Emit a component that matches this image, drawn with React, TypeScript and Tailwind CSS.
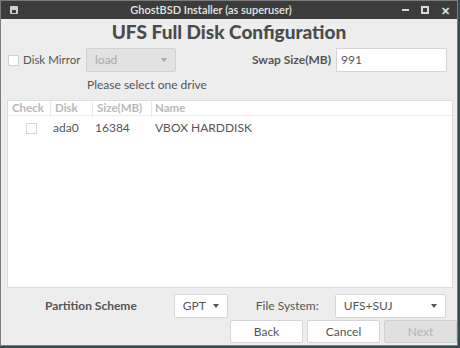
import { ChevronDown } from 'lucide-react';

const font = { fontFamily: 'Lato, "Noto Sans", sans-serif' };

function Combo({ label, disabled, className }: { label: string; disabled?: boolean; className: string }) {
  return (
    <div
      className={`flex items-center justify-between rounded-[2px] border px-2 text-[12px] ${
        disabled ? 'border-[#d2d2d2] bg-[#e2e2e2] text-[#a8a8a8]' : 'border-[#d6d6d6] bg-white text-[#555]'
      } ${className}`}
    >
      <span>{label}</span>
      <span className={`h-0 w-0 border-x-[3.5px] border-t-[4px] border-x-transparent ${disabled ? 'border-t-[#aaa]' : 'border-t-[#555]'}`} />
    </div>
  );
}

export default function App() {
  const rows = [{ disk: 'ada0', size: '16384', name: 'VBOX HARDDISK' }];

  return (
    <div className="h-[348px] w-[460px] overflow-hidden bg-[#2f4f4f]" style={font}>
      <div className="flex h-[346px] w-[458px] flex-col border border-[#7c7c7c] bg-[#ededed]">
        {/* titlebar */}
        <div className="relative flex h-[18px] shrink-0 items-center bg-[#3c3c3c] text-[11px] text-[#e6e6e6]">
          <div className="ml-[9px] flex h-[8px] w-[8px] items-end justify-center rounded-[1px] bg-[#d0d0d0] p-[1px]">
            <div className="h-[3px] w-[4px] bg-[#3c3c3c]" />
          </div>
          <div className="absolute left-0 right-[36px] text-center font-semibold">GhostBSD Installer (as superuser)</div>
          <div className="ml-auto mr-[7px] flex items-center gap-[12px] text-[#e0e0e0]">
            <div className="h-[2px] w-[7px] bg-[#d8d8d8]" />
            <div className="h-[8px] w-[8px] border-[2px] border-t-[2px] border-[#d8d8d8]" />
            <span className="text-[11px] font-bold leading-none">✕</span>
          </div>
        </div>

        {/* heading */}
        <h1 className="mt-[1px] text-center text-[19px] font-black leading-[24px] text-[#4b4b4b]">UFS Full Disk Configuration</h1>

        {/* mirror / swap row */}
        <div className="mt-[4px] flex h-[24px] items-center pl-[7px] text-[12px] text-[#555]">
          <div className="h-[11px] w-[11px] rounded-[1px] border border-[#cfcfcf] bg-white" />
          <span className="ml-[4px] w-[63px] whitespace-nowrap text-[11.5px]">Disk Mirror</span>
          <Combo label="load" disabled className="h-[24px] w-[90px]" />
          <span className="ml-auto mr-[5px] font-bold text-[#555]">Swap Size(MB)</span>
          <div className="mr-[10px] flex h-[24px] w-[111px] items-center border border-[#d6d6d6] bg-white px-[4px]">991</div>
        </div>

        <div className="mt-[4px] pl-[86px] text-[12px] text-[#555]">Please select one drive</div>

        {/* table */}
        <div className="mx-[6px] mt-[6px] h-[188px] w-[446px] border border-[#dcdcdc] bg-white text-[12px]">
          <div className="flex h-[15px] items-center border-b border-[#eee] text-[11.5px] font-bold text-[#b9b9b9]">
            <div className="w-[43px] border-r border-[#e8e8e8] pl-[4px]">Check</div>
            <div className="w-[42px] border-r border-[#e8e8e8] pl-[4px]">Disk</div>
            <div className="w-[59px] border-r border-[#e8e8e8] pl-[4px]">Size(MB)</div>
            <div className="pl-[3px]">Name</div>
          </div>
          {rows.map((r) => (
            <div key={r.disk} className="flex h-[24px] items-center text-[#555]">
              <div className="flex w-[43px] justify-center">
                <div className="ml-[4px] h-[11px] w-[11px] border border-[#d8d8d8] bg-white" />
              </div>
              <div className="w-[42px] pl-[2px]">{r.disk}</div>
              <div className="w-[59px] pl-[2px]">{r.size}</div>
              <div className="pl-[3px]">{r.name}</div>
            </div>
          ))}
        </div>

        {/* partition row */}
        <div className="mt-[6px] flex h-[24px] items-center text-[12px] text-[#555]">
          <span className="ml-[44px] font-bold">Partition Scheme</span>
          <Combo label="GPT" className="ml-[37px] h-[24px] w-[54px]" />
          <span className="ml-[28px]">File System:</span>
          <Combo label="UFS+SUJ" className="ml-[16px] h-[24px] w-[111px]" />
        </div>

        {/* buttons */}
        <div className="mt-[2px] flex justify-end gap-[4px] text-[12px]">
          <button className="h-[23px] w-[73px] rounded-[2px] border border-[#d6d6d6] bg-white text-[#555]">Back</button>
          <button className="h-[23px] w-[73px] rounded-[2px] border border-[#d6d6d6] bg-white text-[#555]">Cancel</button>
          <button className="h-[23px] w-[73px] rounded-[2px] border border-[#d0d0d0] bg-[#e0e0e0] text-[#b4b4b4]">Next</button>
        </div>
      </div>
    </div>
  );
}
